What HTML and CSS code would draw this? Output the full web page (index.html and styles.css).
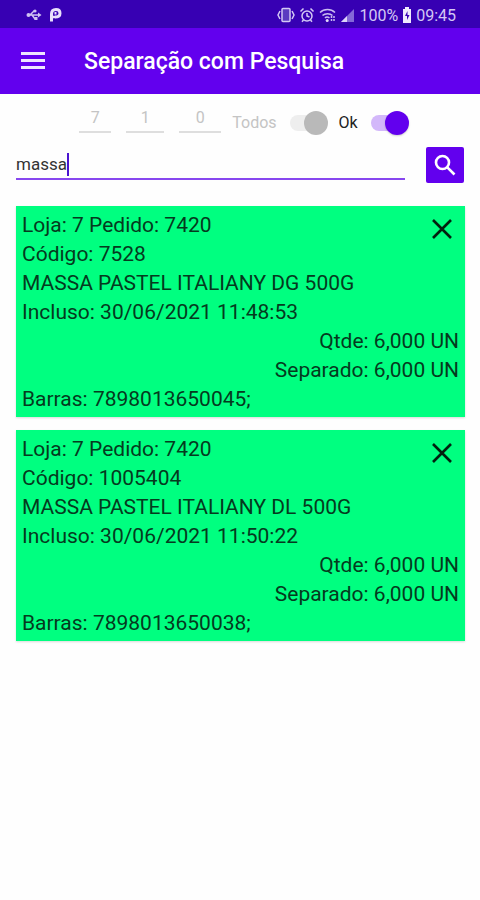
FILE: index.html
```html
<!DOCTYPE html>
<html lang="pt-BR">
<head>
  <meta charset="UTF-8">
  <meta name="viewport" content="width=device-width, initial-scale=1.0">
  <title>Separação com Pesquisa</title>
  <link rel="stylesheet" href="styles.css">
</head>
<body>
  <div class="status-bar">
    <div class="status-group">
      <svg width="16" height="14" viewBox="0 0 16 14" fill="none" stroke="#cfc2f2" stroke-width="1.5">
        <path d="M1 7h13M4 7l4-4h2M6 7l3 4h2"/>
        <circle cx="2.5" cy="7" r="2" fill="#cfc2f2" stroke="none"/>
        <path d="M12 4.500l3.500 2.500-3.500 2.500z" fill="#cfc2f2" stroke="none"/>
        <circle cx="9" cy="3" r="1.600" fill="#cfc2f2" stroke="none"/>
        <rect x="8.500" y="9" width="3" height="3" fill="#cfc2f2" stroke="none"/>
      </svg>
      <svg width="14" height="16" viewBox="0 0 14 16" fill="none" stroke="#e8e0fb" stroke-width="3">
        <path d="M2.500 14.500V7C2.500 4 4.500 2.500 7 2.500C9.500 2.500 11 4 11 6.200C11 8.500 9.500 10 6 10"/>
        <path d="M2.500 10h4M5.500 6.200h2" stroke-width="2.500"/>
      </svg>
    </div>
    <div class="status-group status-right">
      <svg width="18" height="16" viewBox="0 0 18 16" fill="none" stroke="#d3c8f4" stroke-width="1.500">
        <rect x="5" y="1.500" width="8" height="13" rx="1" fill="#5a3bc0"/>
        <path d="M3 4L1 8l2 4M15 4l2 4-2 4"/>
      </svg>
      <svg width="16" height="16" viewBox="0 0 16 16" fill="none" stroke="#d3c8f4" stroke-width="1.500">
        <circle cx="8" cy="9" r="5"/>
        <path d="M8 6v3l2.500 1M1.500 4.500l3-3M14.500 4.500l-3-3M4.500 13L3 14.800M11.500 13l1.500 1.800"/>
      </svg>
      <svg width="17" height="16" viewBox="0 0 17 16" fill="none" stroke="#c9bcf0" stroke-width="1.500">
        <path d="M1 5.500C5 1.500 12 1.500 16 5.500M3.500 8.500C6 6 11 6 13.500 8.500M6 11C7 9.800 9 9.800 10.500 11"/>
        <circle cx="8.200" cy="13.500" r="1.500" fill="#e3dafa" stroke="none"/>
        <path d="M12.500 9v5M15 9v5" stroke-dasharray="2 1"/>
      </svg>
      <svg width="15" height="16" viewBox="0 0 15 16">
        <path d="M14 2v13H1z" fill="#8468d8"/>
        <path d="M7 9v6H1z" fill="#ddd4f8"/>
      </svg>
      <span>100%</span>
      <svg width="10" height="16" viewBox="0 0 10 16">
        <path d="M3 0h4v2h2v14H1V2h2z" fill="#f0eafd"/>
        <path d="M5.500 4L3 9h2v4l2.500-5h-2z" fill="#3700b3"/>
      </svg>
      <span>09:45</span>
    </div>
  </div>

  <header class="app-bar">
    <button class="menu-button" aria-label="Menu">
      <svg width="24" height="18" viewBox="0 0 24 18" fill="#efe5ff">
        <path d="M0 0h24v3H0zM0 7h24v3H0zM0 14h24v3H0z"/>
      </svg>
    </button>
    <h1>Separação com Pesquisa</h1>
  </header>

  <main>
    <form class="search-form">
      <div class="filters">
        <div class="numbers">
          <input class="number loja" type="text" value="7" aria-label="Loja" disabled>
          <input class="number tipo" type="text" value="1" aria-label="Tipo" disabled>
          <input class="number pedido" type="text" value="0" aria-label="Pedido" disabled>
        </div>
        <label class="switch-label disabled">Todos <input class="switch" type="checkbox" disabled></label>
        <label class="switch-label">Ok <input class="switch" type="checkbox" checked></label>
      </div>
      <div class="search-row">
        <div class="search-field">
          <input class="search-input" type="text" value="massa" aria-label="Pesquisa">
          <span class="caret"></span>
        </div>
        <button class="search-button" type="button" aria-label="Pesquisar">
          <svg width="24" height="24" viewBox="0 0 24 24" fill="none" stroke="#fff" stroke-width="2.600">
            <circle cx="9.500" cy="9.500" r="6.500"/>
            <path d="M14.300 14.300L21.500 21.500"/>
          </svg>
        </button>
      </div>
    </form>

    <section class="items">
      <article class="item">
        <button class="remove" aria-label="Remover">
          <svg width="20" height="20" viewBox="0 0 20 20" fill="none" stroke="#02210f" stroke-width="2.600">
            <path d="M1 1l18 18M19 1L1 19"/>
          </svg>
        </button>
        <p>Loja: 7 Pedido: 7420</p>
        <p>Código: 7528</p>
        <p>MASSA PASTEL ITALIANY DG 500G</p>
        <p>Incluso: 30/06/2021 11:48:53</p>
        <p class="amount">Qtde: 6,000 UN</p>
        <p class="amount">Separado: 6,000 UN</p>
        <p>Barras: 7898013650045;</p>
      </article>
      <article class="item">
        <button class="remove" aria-label="Remover">
          <svg width="20" height="20" viewBox="0 0 20 20" fill="none" stroke="#02210f" stroke-width="2.600">
            <path d="M1 1l18 18M19 1L1 19"/>
          </svg>
        </button>
        <p>Loja: 7 Pedido: 7420</p>
        <p>Código: 1005404</p>
        <p>MASSA PASTEL ITALIANY DL 500G</p>
        <p>Incluso: 30/06/2021 11:50:22</p>
        <p class="amount">Qtde: 6,000 UN</p>
        <p class="amount">Separado: 6,000 UN</p>
        <p>Barras: 7898013650038;</p>
      </article>
    </section>
  </main>
</body>
</html>
```

FILE: styles.css
```css
* {
  box-sizing: border-box;
}

body {
  margin: 0;
  background-color: #fefefe;
  color: #053a1e;
  font-family: Roboto, "Liberation Sans", sans-serif;
}

button {
  padding: 0;
  border: none;
  background: none;
  cursor: pointer;
}

svg {
  display: block;
}

/* Status bar */
.status-bar {
  display: flex;
  justify-content: space-between;
  align-items: center;
  height: 28px;
  padding: 2px 24px 0 26px;
  background-color: #3700b3;
  color: #d3c8f4;
  font-size: 16px;
}

.status-group {
  display: flex;
  align-items: center;
  gap: 7px;
}

.status-right {
  gap: 4px;
}

/* App bar */
.app-bar {
  display: flex;
  align-items: center;
  gap: 39px;
  height: 66px;
  padding: 0 21px;
  background-color: #6200ee;
}

h1 {
  margin: 0;
  color: #fff;
  font-size: 23px;
  font-weight: 500;
}

/* Filters */
.search-form {
  padding: 9px 16px 0;
}

.filters {
  display: flex;
  justify-content: center;
  align-items: center;
  gap: 11px;
  height: 40px;
  padding-left: 8px;
}

.numbers {
  display: flex;
  gap: 15px;
  padding-bottom: 8px;
}

.number {
  height: 28px;
  padding: 0 0 2px;
  border: none;
  border-bottom: 2px solid #dedede;
  background: none;
  color: #c4c4c4;
  font-family: inherit;
  font-size: 16px;
  text-align: center;
}

.loja {
  width: 32px;
}

.tipo {
  width: 38px;
}

.pedido {
  width: 42px;
}

.switch-label {
  display: flex;
  align-items: center;
  gap: 13px;
  padding-bottom: 1px;
  color: #222;
  font-size: 16px;
}

.switch-label.disabled {
  color: #c4c4c4;
}

.switch {
  position: relative;
  width: 38px;
  height: 24px;
  margin: 0;
  appearance: none;
}

.switch::before {
  content: "";
  position: absolute;
  inset: 4px 6px 4px 0;
  border-radius: 8px;
  background-color: #eee;
}

.switch::after {
  content: "";
  position: absolute;
  top: 0;
  right: 0;
  width: 24px;
  height: 24px;
  border-radius: 50%;
  background-color: #b9b9b9;
}

.switch:checked::before {
  background-color: #d3b8fa;
}

.switch:checked::after {
  background-color: #6200ee;
  box-shadow: 0 1px 2px rgba(0, 0, 0, 0.2);
}

/* Search */
.search-row {
  display: flex;
  align-items: center;
  gap: 21px;
  padding: 4px 0;
}

.search-field {
  flex: 1;
  display: flex;
  align-items: center;
  height: 30px;
  border-bottom: 2px solid #8747ef;
}

.search-input {
  field-sizing: content;
  padding: 0;
  border: none;
  outline: none;
  background: none;
  color: #333;
  font-family: inherit;
  font-size: 17px;
}

.caret {
  width: 2px;
  height: 23px;
  background-color: #4a14d0;
}

.search-button {
  display: flex;
  justify-content: center;
  align-items: center;
  width: 38px;
  height: 36px;
  border-radius: 2px;
  background-color: #6200ee;
}

/* Items */
.items {
  display: flex;
  flex-direction: column;
  gap: 13px;
  padding: 19px 15px 16px 16px;
}

.item {
  position: relative;
  padding: 5px 6px 3px;
  background-color: #00ff80;
  box-shadow: 0 1px 2px rgba(0, 0, 0, 0.15);
}

.item p {
  margin: 0;
  font-size: 21px;
  line-height: 29px;
}

.item .amount {
  text-align: right;
}

.remove {
  position: absolute;
  top: 13px;
  right: 13px;
}
```
